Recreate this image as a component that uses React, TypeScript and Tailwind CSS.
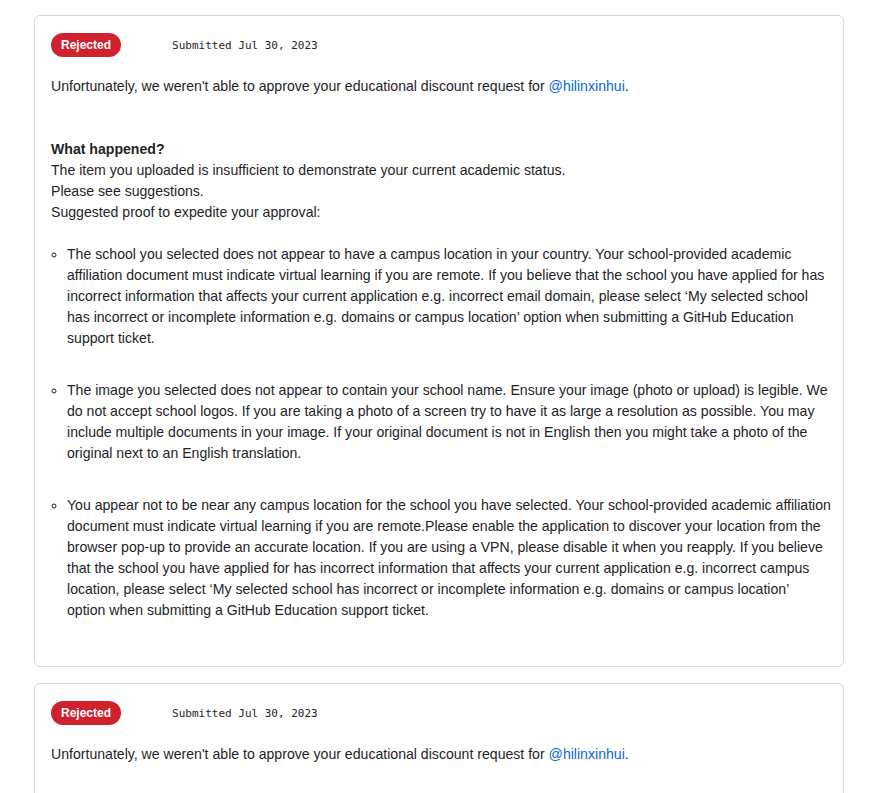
// each suggestion split where the original wraps
const SUGGESTIONS = [
  [
    'The school you selected does not appear to have a campus location in your country. Your school-provided academic',
    'affiliation document must indicate virtual learning if you are remote. If you believe that the school you have applied for has',
    'incorrect information that affects your current application e.g. incorrect email domain, please select \u2018My selected school',
    'has incorrect or incomplete information e.g. domains or campus location\u2019 option when submitting a GitHub Education',
    'support ticket.',
  ],
  [
    'The image you selected does not appear to contain your school name. Ensure your image (photo or upload) is legible. We',
    'do not accept school logos. If you are taking a photo of a screen try to have it as large a resolution as possible. You may',
    'include multiple documents in your image. If your original document is not in English then you might take a photo of the',
    'original next to an English translation.',
  ],
  [
    'You appear not to be near any campus location for the school you have selected. Your school-provided academic affiliation',
    'document must indicate virtual learning if you are remote.Please enable the application to discover your location from the',
    'browser pop-up to provide an accurate location. If you are using a VPN, please disable it when you reapply. If you believe',
    'that the school you have applied for has incorrect information that affects your current application e.g. incorrect campus',
    'location, please select \u2018My selected school has incorrect or incomplete information e.g. domains or campus location\u2019',
    'option when submitting a GitHub Education support ticket.',
  ],
]

function Header() {
  return (
    <div className="flex items-center h-6">
      <span className="inline-flex items-center h-6 px-[10px] rounded-full bg-[#cf222e] text-white text-[12px] font-semibold">
        Rejected
      </span>
      <span className="ml-[51px] text-[11px] text-[#1f2328] font-['DejaVu_Sans_Mono',monospace]">
        Submitted Jul 30, 2023
      </span>
    </div>
  )
}

function Intro() {
  return (
    <p className="mt-[19px]">
      Unfortunately, we weren't able to approve your educational discount request for{' '}
      <a className="text-[#0969da]" href="#">@hilinxinhui</a>.
    </p>
  )
}

function ApplicationCard({ full }: { full?: boolean }) {
  return (
    <div className="w-[810px] border border-[#d0d7de] rounded-md bg-white px-4 pt-[17px] pb-[45px]">
      <Header />
      <Intro />
      {full && (
        <>
          <div className="mt-[42px]">
            <p className="font-semibold">What happened?</p>
            <p>The item you uploaded is insufficient to demonstrate your current academic status.</p>
            <p>Please see suggestions.</p>
            <p>Suggested proof to expedite your approval:</p>
          </div>
          <ul className="mt-[21px] pl-4 list-[circle] flex flex-col gap-[31px]">
            {SUGGESTIONS.map((lines, i) => (
              <li key={i} className="whitespace-nowrap marker:text-[#1f2328]">
                {lines.map((l, j) => (
                  <span key={j}>
                    {j > 0 && <br />}
                    {l}
                  </span>
                ))}
              </li>
            ))}
          </ul>
        </>
      )}
    </div>
  )
}

export default function App() {
  return (
    <div className="bg-white pl-[34px] pt-[15px] text-[14.1px] leading-[21px] text-[#1f2328] font-['Liberation_Sans',Arial,sans-serif] overflow-hidden h-[793px]">
      <div className="flex flex-col gap-4">
        <ApplicationCard full />
        <ApplicationCard />
      </div>
    </div>
  )
}
